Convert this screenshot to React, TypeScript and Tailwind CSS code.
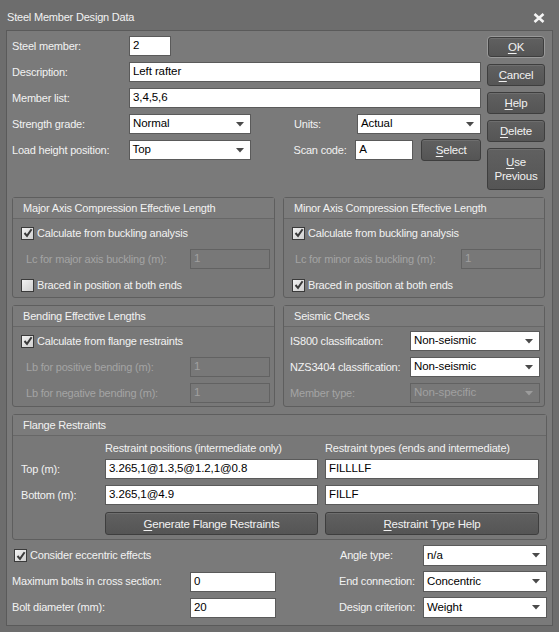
import React from "react";

const Arrow = ({ disabled = false }: { disabled?: boolean }) => (
  <svg width="8" height="5" viewBox="0 0 8 5" className="shrink-0">
    <path d="M0 0 H8 L4 4.5 Z" fill={disabled ? "#9c9c9c" : "#4a4a4a"} />
  </svg>
);

const Check = ({ checked }: { checked: boolean }) => (
  <div className="w-[13px] h-[13px] shrink-0 border border-[#3a3a3a] bg-gradient-to-br from-[#f2f2f2] to-[#cfcfcf] flex items-center justify-center">
    {checked && (
      <svg width="10" height="10" viewBox="0 0 10 10">
        <path d="M1.5 5 L4 7.8 L8.6 1.2" stroke="#3a3a3a" strokeWidth="2" fill="none" />
      </svg>
    )}
  </div>
);

const Input = ({ value, w, h = "h-5", disabled = false }: { value: string; w: string; h?: string; disabled?: boolean }) => (
  <div
    className={`${w} ${h} shrink-0 flex items-center px-[3px] text-[11.5px] tracking-[-0.1px] border ${
      disabled ? "border-[#626262] text-[#a0a0a0] bg-transparent" : "border-[#5a5a5a] bg-white text-black"
    }`}
  >
    {value}
  </div>
);

const Select = ({ value, w, h = "h-5", disabled = false }: { value: string; w: string; h?: string; disabled?: boolean }) => (
  <div
    className={`${w} ${h} shrink-0 flex items-center justify-between pl-[3px] pr-[6px] text-[11.5px] tracking-[-0.1px] border ${
      disabled ? "border-[#626262] text-[#a0a0a0] bg-transparent" : "border-[#5a5a5a] bg-white text-black"
    }`}
  >
    <span>{value}</span>
    <Arrow disabled={disabled} />
  </div>
);

const Btn = ({ children, cls = "" }: { children: React.ReactNode; cls?: string }) => (
  <div
    className={`flex items-center justify-center text-center rounded-[3px] border border-[#3e3e3e] bg-gradient-to-b from-[#606060] to-[#555555] text-[#f2f2f2] shadow-[inset_0_1px_0_#6e6e6e] leading-[14px] text-[11.5px] ${cls}`}
  >
    {children}
  </div>
);

const U = ({ children }: { children: React.ReactNode }) => <span className="underline underline-offset-[2px]">{children}</span>;

const Group = ({ title, children, cls = "" }: { title: string; children: React.ReactNode; cls?: string }) => (
  <div className={`border border-[#5e5e5e] rounded-[3px] bg-[#787878] flex flex-col ${cls}`}>
    <div className="h-[21px] shrink-0 flex items-center pl-[10px] border-b border-[#676767] bg-[#7b7b7b]">{title}</div>
    {children}
  </div>
);

export default function App() {
  return (
    <div className="w-[559px] h-[632px] bg-[#6d6d6d] px-[6px] pb-[6px] flex flex-col text-[11px] tracking-[-0.2px] text-[#f2f2f2] font-['Liberation_Sans',Arial,sans-serif] overflow-hidden">
      <div className="h-[30px] shrink-0 flex items-center justify-between pl-[1px] pr-[8px] pt-[5px] text-[11px]">
        <span>Steel Member Design Data</span>
        <svg width="12" height="10" viewBox="0 0 12 10">
          <path d="M1.5 1 L10.5 9 M10.5 1 L1.5 9" stroke="#f4f4f4" strokeWidth="2.6" />
        </svg>
      </div>
      <div className="flex-1 bg-[#7a7a7a] border border-[#5a5a5a] px-[5px] pt-[5px] flex flex-col">
        {/* Top section */}
        <div className="flex gap-[6px] h-[154px] shrink-0">
          <div className="w-[469px] flex flex-col gap-[6px]">
            <div className="flex items-center h-5">
              <div className="w-[117px]">Steel member:</div>
              <Input value="2" w="w-[42px]" />
            </div>
            <div className="flex items-center h-5">
              <div className="w-[117px]">Description:</div>
              <Input value="Left rafter" w="w-[352px]" />
            </div>
            <div className="flex items-center h-5">
              <div className="w-[117px]">Member list:</div>
              <Input value="3,4,5,6" w="w-[352px]" />
            </div>
            <div className="flex items-center h-5">
              <div className="w-[117px]">Strength grade:</div>
              <Select value="Normal" w="w-[122px]" />
              <div className="ml-[43px] w-[63px]">Units:</div>
              <Select value="Actual" w="w-[124px]" />
            </div>
            <div className="flex items-center h-5">
              <div className="w-[117px]">Load height position:</div>
              <Select value="Top" w="w-[122px]" />
              <div className="ml-[43px] w-[62px]">Scan code:</div>
              <Input value="A" w="w-[58px]" />
              <Btn cls="ml-[8px] w-[60px] h-[22px]">
                <span><U>S</U>elect</span>
              </Btn>
            </div>
          </div>
          <div className="w-[58px] flex flex-col gap-[6px]">
            <div className="h-[22px] rounded-[4px] border border-[#9a9a9a] p-0">
              <Btn cls="h-full">
                <span><U>O</U>K</span>
              </Btn>
            </div>
            <Btn cls="h-[22px]"><span><U>C</U>ancel</span></Btn>
            <Btn cls="h-[22px]"><span><U>H</U>elp</span></Btn>
            <Btn cls="h-[22px]"><span><U>D</U>elete</span></Btn>
            <Btn cls="h-[42px] flex-col">
              <span><U>U</U>se</span>
              <span>Previous</span>
            </Btn>
          </div>
        </div>

        {/* Groups */}
        <div className="mt-[7px] grid grid-cols-[263px_262px] gap-x-[8px] gap-y-[7px]">
          <Group title="Major Axis Compression Effective Length" cls="h-[101px]">
            <div className="flex flex-col gap-[6px] pt-[4px] pl-[8px] pr-[4px]">
              <div className="flex items-center h-5 gap-[3px]">
                <Check checked />
                <span>Calculate from buckling analysis</span>
              </div>
              <div className="flex items-center h-5 justify-between">
                <span className="pl-[5px] text-[#a4a4a4]">Lc for major axis buckling (m):</span>
                <Input value="1" w="w-[80px]" disabled />
              </div>
              <div className="flex items-center h-5 gap-[3px]">
                <Check checked={false} />
                <span>Braced in position at both ends</span>
              </div>
            </div>
          </Group>
          <Group title="Minor Axis Compression Effective Length" cls="h-[101px]">
            <div className="flex flex-col gap-[6px] pt-[4px] pl-[8px] pr-[3px]">
              <div className="flex items-center h-5 gap-[3px]">
                <Check checked />
                <span>Calculate from buckling analysis</span>
              </div>
              <div className="flex items-center h-5 justify-between">
                <span className="pl-[3px] text-[#a4a4a4]">Lc for minor axis buckling (m):</span>
                <Input value="1" w="w-[80px]" disabled />
              </div>
              <div className="flex items-center h-5 gap-[3px]">
                <Check checked />
                <span>Braced in position at both ends</span>
              </div>
            </div>
          </Group>
          <Group title="Bending Effective Lengths" cls="h-[102px]">
            <div className="flex flex-col gap-[6px] pt-[4px] pl-[8px] pr-[4px]">
              <div className="flex items-center h-5 gap-[3px]">
                <Check checked />
                <span>Calculate from flange restraints</span>
              </div>
              <div className="flex items-center h-5 justify-between">
                <span className="pl-[5px] text-[#a4a4a4]">Lb for positive bending (m):</span>
                <Input value="1" w="w-[80px]" disabled />
              </div>
              <div className="flex items-center h-5 justify-between">
                <span className="pl-[5px] text-[#a4a4a4]">Lb for negative bending (m):</span>
                <Input value="1" w="w-[80px]" disabled />
              </div>
            </div>
          </Group>
          <Group title="Seismic Checks" cls="h-[102px]">
            <div className="flex flex-col gap-[6px] pt-[4px] pl-[6px] pr-[4px]">
              <div className="flex items-center h-5 justify-between">
                <span>IS800 classification:</span>
                <Select value="Non-seismic" w="w-[130px]" />
              </div>
              <div className="flex items-center h-5 justify-between">
                <span>NZS3404 classification:</span>
                <Select value="Non-seismic" w="w-[130px]" />
              </div>
              <div className="flex items-center h-5 justify-between">
                <span className="text-[#a4a4a4]">Member type:</span>
                <Select value="Non-specific" w="w-[130px]" disabled />
              </div>
            </div>
          </Group>
        </div>

        <Group title="Flange Restraints" cls="mt-[7px] h-[126px]">
          <div className="grid grid-cols-[77px_213px_214px] gap-x-[7px] pl-[8px] pt-[4px]">
            <div className="h-[16px]" />
            <div className="h-[16px] flex items-center">Restraint positions (intermediate only)</div>
            <div className="h-[16px] flex items-center">Restraint types (ends and intermediate)</div>

            <div className="mt-[3px] h-5 flex items-center">Top (m):</div>
            <div className="mt-[3px]"><Input value="3.265,1@1.3,5@1.2,1@0.8" w="w-full" /></div>
            <div className="mt-[3px]"><Input value="FILLLLF" w="w-full" /></div>

            <div className="mt-[6px] h-5 flex items-center">Bottom (m):</div>
            <div className="mt-[6px]"><Input value="3.265,1@4.9" w="w-full" /></div>
            <div className="mt-[6px]"><Input value="FILLF" w="w-full" /></div>

            <div className="mt-[7px]" />
            <Btn cls="mt-[7px] h-[23px]"><span><U>G</U>enerate Flange Restraints</span></Btn>
            <Btn cls="mt-[7px] h-[23px]"><span><U>R</U>estraint Type Help</span></Btn>
          </div>
        </Group>

        {/* Bottom */}
        <div className="mt-[5px] flex justify-between">
          <div className="w-[264px] flex flex-col gap-[5px]">
            <div className="h-[21px] flex items-center gap-[3px] pl-[2px]">
              <Check checked />
              <span>Consider eccentric effects</span>
            </div>
            <div className="h-[21px] flex items-center justify-between">
              <span>Maximum bolts in cross section:</span>
              <Input value="0" w="w-[86px]" />
            </div>
            <div className="h-[21px] flex items-center justify-between">
              <span>Bolt diameter (mm):</span>
              <Input value="20" w="w-[86px]" />
            </div>
          </div>
          <div className="w-[208px] flex flex-col gap-[5px]">
            <div className="h-[21px] flex items-center justify-between">
              <span className="pl-[1px]">Angle type:</span>
              <Select value="n/a" w="w-[124px]" h="h-[21px]" />
            </div>
            <div className="h-[21px] flex items-center justify-between">
              <span>End connection:</span>
              <Select value="Concentric" w="w-[124px]" h="h-[21px]" />
            </div>
            <div className="h-[21px] flex items-center justify-between">
              <span>Design criterion:</span>
              <Select value="Weight" w="w-[124px]" h="h-[21px]" />
            </div>
          </div>
        </div>
      </div>
    </div>
  );
}
